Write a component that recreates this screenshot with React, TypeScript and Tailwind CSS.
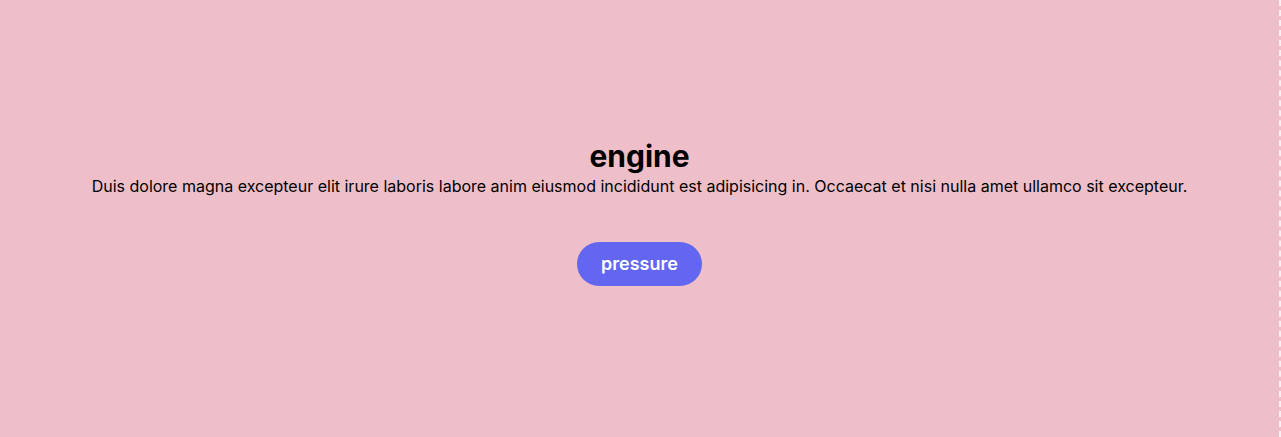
import React from 'react';

const App: React.FC = () => {
    return (
        <div className="w-[1281px] h-[437px] flex">
            <div className="flex-1 h-full bg-[#eebfc8] border-r-2 border-dashed border-[#f5f0f1] flex flex-col items-center justify-center pb-[14px] font-['Inter',sans-serif] text-black">
                <h1 className="text-[30px] font-bold leading-[36px]">engine</h1>
                <p className="text-base leading-6">
                    Duis dolore magna excepteur elit irure laboris labore anim eiusmod incididunt est adipisicing in. Occaecat et nisi nulla amet ullamco sit excepteur.
                </p>
                <button className="mt-[44px] h-11 px-6 rounded-full bg-[#6366f1] text-white text-lg font-semibold">
                    pressure
                </button>
            </div>
        </div>
    );
};

export default App;
